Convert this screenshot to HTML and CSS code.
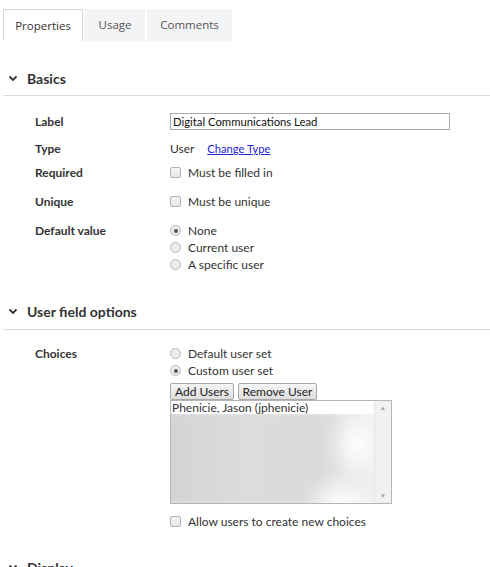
FILE: index.html
```html
<!DOCTYPE html>
<html>
<head>
<meta charset="utf-8">
<link rel="stylesheet" href="styles.css">
</head>
<body>
<div class="tabs">
  <div class="tab active">Properties</div>
  <div class="tab">Usage</div>
  <div class="tab">Comments</div>
</div>

<div class="section-head s-basics">
  <svg class="chev" width="10" height="7" viewBox="0 0 10 7"><path d="M1.5 1.5 L5 5 L8.5 1.5" fill="none" stroke="#333" stroke-width="1.8"/></svg>
  <span>Basics</span>
</div>
<div class="section-body">
  <div class="row r-label">
    <div class="lbl">Label</div>
    <div class="val"><div class="textbox">Digital Communications Lead</div></div>
  </div>
  <div class="row r-type">
    <div class="lbl">Type</div>
    <div class="val">User <a class="link" href="#">Change Type</a></div>
  </div>
  <div class="row r-req">
    <div class="lbl">Required</div>
    <div class="val"><span class="check"></span>Must be filled in</div>
  </div>
  <div class="row r-uniq">
    <div class="lbl">Unique</div>
    <div class="val"><span class="check"></span>Must be unique</div>
  </div>
  <div class="row r-def">
    <div class="lbl">Default value</div>
    <div class="val">
      <div class="opt"><span class="radio on"></span>None</div>
      <div class="opt"><span class="radio"></span>Current user</div>
      <div class="opt"><span class="radio"></span>A specific user</div>
    </div>
  </div>
</div>

<div class="section-head s-user">
  <svg class="chev" width="10" height="7" viewBox="0 0 10 7"><path d="M1.5 1.5 L5 5 L8.5 1.5" fill="none" stroke="#333" stroke-width="1.8"/></svg>
  <span>User field options</span>
</div>
<div class="section-body">
  <div class="row r-choices">
    <div class="lbl">Choices</div>
    <div class="val">
      <div class="opt"><span class="radio"></span>Default user set</div>
      <div class="opt"><span class="radio on"></span>Custom user set</div>
      <div class="btns"><button class="btn">Add Users</button><button class="btn">Remove User</button></div>
      <div class="listbox">
        <div class="list-main">
          <div class="item">Phenicie, Jason (jphenicie)</div>
          <div class="blur-wrap"><div class="blur"></div></div>
        </div>
        <div class="scroll"><span class="arr">&#9650;</span><span class="arr">&#9660;</span></div>
      </div>
      <div class="opt allow"><span class="check"></span>Allow users to create new choices</div>
    </div>
  </div>
</div>

<div class="section-head s-display">
  <svg class="chev" width="10" height="7" viewBox="0 0 10 7"><path d="M1.5 1.5 L5 5 L8.5 1.5" fill="none" stroke="#333" stroke-width="1.8"/></svg>
  <span>Display</span>
</div>
</body>
</html>
```

FILE: styles.css
```css
html, body {
  margin: 0;
  padding: 0;
  background: #fff;
  overflow: hidden;
}
body {
  font-family: Lato, "Liberation Sans", sans-serif;
  font-size: 12px;
  color: #333;
  width: 490px;
  height: 567px;
}
.tabs {
  display: flex;
  padding: 9px 0 0 3px;
  gap: 2px;
  height: 32px;
}
.tab {
  font-family: "Open Sans", sans-serif;
  font-size: 11.5px;
  color: #555;
  background: #f3f4f6;
  height: 32px;
  line-height: 32px;
  box-sizing: border-box;
  text-align: center;
}
.tab.active {
  background: #fff;
  border: 1px solid #d8d8d8;
  border-bottom: none;
  color: #333;
  width: 80px;
}
.tab:nth-child(2) { width: 60px; }
.tab:nth-child(3) { width: 85px; }

.section-head {
  display: flex;
  align-items: center;
  height: 20px;
  margin-left: 3px;
  border-bottom: 1px solid #dcdcdc;
  padding-bottom: 7px;
  font-weight: 700;
  font-size: 14px;
  color: #333;
}
.section-head .chev { margin: 0 9px 0 5px; }
.s-basics { margin-top: 27px; }
.s-user { margin-top: 28px; padding-bottom: 8px; }
.s-display { margin-top: 27px; border-bottom: none; }

.section-body {
  padding-left: 35px;
}
.row {
  display: flex;
  line-height: 17px;
}
.lbl {
  width: 135px;
  font-weight: 700;
  color: #333;
}
.val {
  flex: 1;
  color: #333;
}
.r-label { margin-top: 17px; }
.r-type { margin-top: 10px; }
.r-req { margin-top: 7px; }
.r-uniq { margin-top: 12px; }
.r-def { margin-top: 12px; }
.r-choices { margin-top: 15px; }

.textbox {
  width: 280px;
  height: 17px;
  box-sizing: border-box;
  border: 1px solid #a9a9a9;
  padding-left: 2px;
  line-height: 15px;
  font-size: 11.3px;
  color: #111;
}
.link {
  color: #2323d8;
  margin-left: 10px;
  font-size: 11.2px;
  text-decoration: underline;
}
.check {
  display: inline-block;
  width: 11px;
  height: 11px;
  box-sizing: border-box;
  border: 1px solid #b3b3b3;
  border-radius: 2px;
  background: linear-gradient(#f4f4f4, #e6e6e6);
  vertical-align: -1px;
  margin-right: 7px;
}
.radio {
  display: inline-block;
  width: 11px;
  height: 11px;
  box-sizing: border-box;
  border: 1px solid #b8b8b8;
  border-radius: 50%;
  background: #ececec;
  vertical-align: -1px;
  margin-right: 7px;
  position: relative;
}
.radio.on::after {
  content: "";
  position: absolute;
  left: 2.5px;
  top: 2.5px;
  width: 4px;
  height: 4px;
  border-radius: 50%;
  background: #555;
}
.btns {
  display: flex;
  gap: 4px;
  margin-top: 4px;
}
.btn {
  font-family: Lato, sans-serif;
  font-size: 12px;
  color: #222;
  height: 17px;
  line-height: 14px;
  padding: 0;
  white-space: nowrap;
  border: 1px solid #a8a8a8;
  border-radius: 2px;
  background: linear-gradient(#f6f6f6, #dedede);
  margin: 0;
}
.btn:first-child { width: 64px; }
.btn:last-child { width: 79px; }
.listbox {
  display: flex;
  width: 222px;
  height: 104px;
  box-sizing: border-box;
  border: 1px solid #b5b5b5;
}
.list-main {
  flex: 1;
  display: flex;
  flex-direction: column;
  overflow: hidden;
}
.item {
  color: #333;
  line-height: 13px;
  padding-left: 1px;
}
.blur-wrap {
  flex: 1;
  overflow: hidden;
  position: relative;
}
.blur {
  position: absolute;
  left: -10px; right: -10px; top: -4px; bottom: -4px;
  background:
    radial-gradient(ellipse 30px 40px at 88% 35%, #ffffff 0%, rgba(255,255,255,0) 100%),
    radial-gradient(ellipse 40px 30px at 80% 95%, #ffffff 0%, rgba(255,255,255,0) 100%),
    linear-gradient(90deg, #d3d3d3 0%, #dcdcdc 40%, #d9d9d9 70%, #f2f2f2 100%);
  filter: blur(4px);
}
.scroll {
  width: 17px;
  background: #f1f1f1;
  border-left: 1px solid #e4e4e4;
  display: flex;
  flex-direction: column;
  justify-content: space-between;
  align-items: center;
  padding: 3px 0;
  box-sizing: border-box;
}
.arr {
  font-size: 6px;
  color: #a3a3a3;
  line-height: 8px;
}
.opt { line-height: 17px; }
.allow { margin-top: 9px; }
```
